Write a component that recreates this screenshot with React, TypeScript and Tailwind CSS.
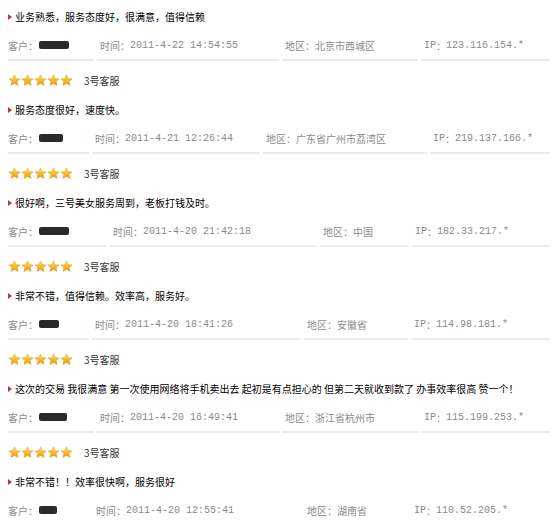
import React from "react";

type Block = {
  comment: string;
  nameW: number;
  time: string;
  region: string;
  ip: string;
  cols: [number, number, number];
  stars: boolean;
};

const blocks: Block[] = [
  { comment: "业务熟悉，服务态度好，很满意，值得信赖", nameW: 30, time: "2011-4-22 14:54:55", region: "北京市西城区", ip: "123.116.154.*", cols: [100, 285, 424], stars: false },
  { comment: "服务态度很好，速度快。", nameW: 24, time: "2011-4-21 12:26:44", region: "广东省广州市荔湾区", ip: "219.137.166.*", cols: [95, 266, 433], stars: true },
  { comment: "很好啊，三号美女服务周到，老板打钱及时。", nameW: 30, time: "2011-4-20 21:42:18", region: "中国", ip: "182.33.217.*", cols: [113, 323, 415], stars: true },
  { comment: "非常不错，值得信赖。效率高，服务好。", nameW: 20, time: "2011-4-20 18:41:26", region: "安徽省", ip: "114.98.181.*", cols: [95, 307, 414], stars: true },
  { comment: "这次的交易 我很满意 第一次使用网络将手机卖出去 起初是有点担心的 但第二天就收到款了 办事效率很高 赞一个！", nameW: 28, time: "2011-4-20 16:49:41", region: "浙江省杭州市", ip: "115.199.253.*", cols: [100, 285, 424], stars: true },
  { comment: "非常不错！！效率很快啊，服务很好", nameW: 18, time: "2011-4-20 12:55:41", region: "湖南省", ip: "110.52.205.*", cols: [96, 307, 414], stars: true },
];

const CJK = "font-['Noto_Sans_CJK_SC','Noto_Sans',sans-serif]";
const MONO = "font-['Liberation_Mono','DejaVu_Sans_Mono',monospace]";

function Star() {
  return (
    <svg width="13" height="13" viewBox="0 0 24 24">
      <defs>
        <linearGradient id="sg" x1="0" y1="0" x2="0" y2="1">
          <stop offset="0%" stopColor="#fde07a" />
          <stop offset="55%" stopColor="#f3b928" />
          <stop offset="100%" stopColor="#e09a12" />
        </linearGradient>
      </defs>
      <path
        d="M12 1.5l3.1 7 7.4.6-5.6 4.9 1.7 7.4L12 17.5l-6.6 3.9 1.7-7.4L1.5 9.1l7.4-.6z"
        fill="url(#sg)"
        stroke="#d8960e"
        strokeWidth="0.8"
        strokeLinejoin="round"
      />
    </svg>
  );
}

function Meta({ b }: { b: Block }) {
  const starts = [8, ...b.cols];
  const cells = [
    <>
      <span className={CJK}>客户：</span>
      <span className="inline-block h-[8px] bg-[#2a2a2a] rounded-[2px] blur-[0.7px] ml-[1px]" style={{ width: b.nameW }} />
    </>,
    <>
      <span className={CJK}>时间：</span>
      <span className={MONO}>{b.time}</span>
    </>,
    <span className={CJK}>地区：{b.region}</span>,
    <>
      <span className={MONO}>IP</span>
      <span className={CJK}>：</span>
      <span className={MONO}>{b.ip}</span>
    </>,
  ];
  return (
    <div className="flex h-[30px] pl-[8px] gap-[3px] text-[10px] text-[#8a8a8a]">
      {cells.map((c, i) => {
        const left = i === 0 ? 8 : starts[i] - 3;
        const right = i < 3 ? starts[i + 1] - 6 : 550;
        return (
          <div
            key={i}
            className={
              "flex items-center h-full border-b-2 border-[#ebebeb] whitespace-nowrap shrink-0 " +
              (i === 0 ? "pl-0" : "pl-[3px]")
            }
            style={{ width: right - left }}
          >
            {c}
          </div>
        );
      })}
    </div>
  );
}

function Comment({ text }: { text: string }) {
  return (
    <div className="flex items-center h-[29px] pl-[8px] whitespace-nowrap">
      <svg width="4" height="6" viewBox="0 0 4 6" className="mr-[3px] shrink-0">
        <path d="M0 0L4 3L0 6z" fill="#c0392b" />
      </svg>
      <span className={"text-[10px] text-black " + CJK}>{text}</span>
    </div>
  );
}

export default function App() {
  return (
    <div className="w-[554px] h-[520px] overflow-hidden bg-white pt-[2px] flex flex-col gap-[4px]">
      {blocks.map((b, i) => (
        <div key={i} className="flex flex-col">
          {b.stars && (
            <div className="flex items-center h-[30px] pl-[8px]">
              <div className="flex">
                <Star />
                <Star />
                <Star />
                <Star />
                <Star />
              </div>
              <span className={"ml-[11px] text-[10px] text-[#333] " + CJK}>3号客服</span>
            </div>
          )}
          <Comment text={b.comment} />
          <Meta b={b} />
        </div>
      ))}
    </div>
  );
}
